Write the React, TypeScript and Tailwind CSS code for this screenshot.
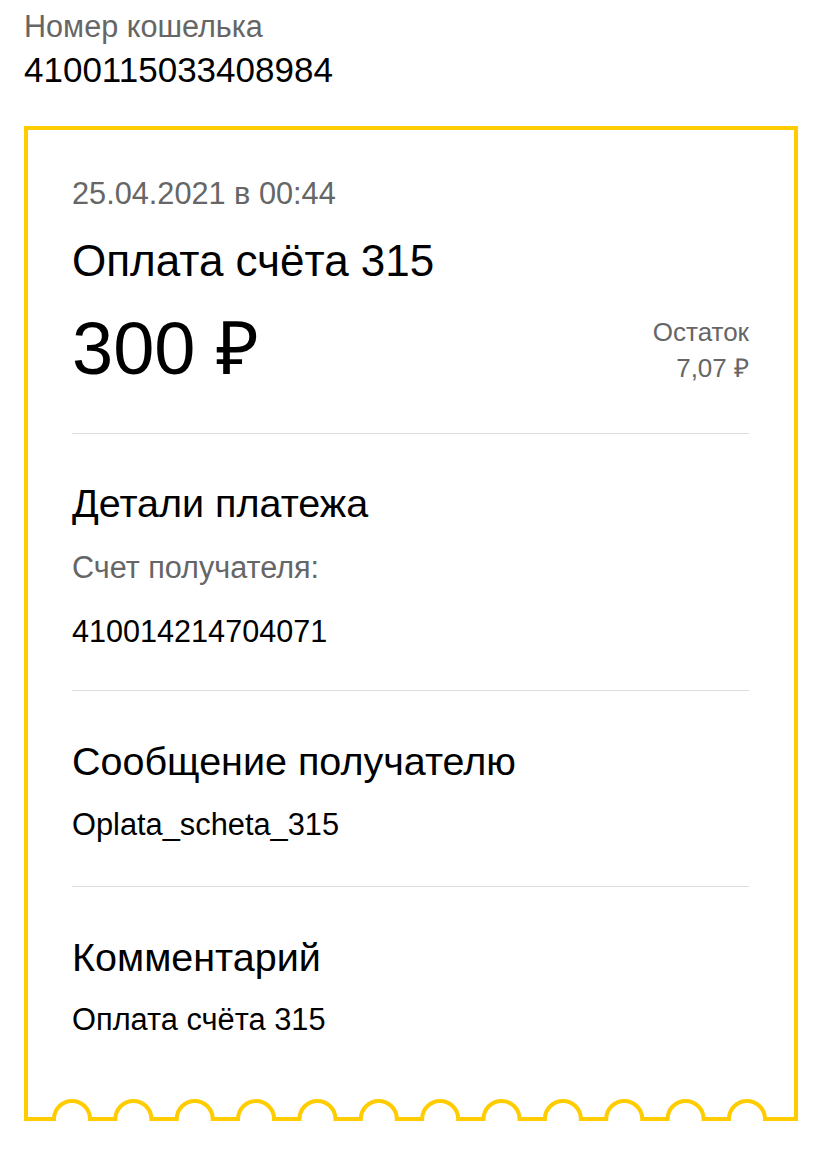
import React from "react";

const centers = Array.from({ length: 12 }, (_, i) => 44 + i * 61.36);

function Edge() {
  let d = "M0 22";
  for (const c of centers) {
    d += ` H${(c - 18).toFixed(2)} A18 18 0 0 1 ${(c + 18).toFixed(2)} 22`;
  }
  d += " H766";
  return (
    <svg width="766" height="24" viewBox="0 0 766 24" className="block mt-[59px]">
      <path d={d} fill="none" stroke="#ffcc00" strokeWidth="4" />
    </svg>
  );
}

function Divider({ mt }: { mt: string }) {
  return <div className={`h-px bg-[#dedcdc] ${mt}`} />;
}

export default function App() {
  return (
    <div className="bg-white min-h-[1149px] w-[831px] pl-[24px] pt-[8px] text-black [font-family:'Liberation_Sans',Arial,sans-serif]">
      <div className="text-[30.6px] leading-[36px] text-[#666666]">Номер кошелька</div>
      <div className="mt-[6px] text-[35px] leading-[40px]">4100115033408984</div>

      <div className="mt-[36px] w-[774px] border-x-4 border-t-4 border-[#ffcc00]">
        <div className="pl-[44px] pr-[45px] pt-[46px]">
          <div className="text-[30.7px] leading-[36px] text-[#666666]">25.04.2021 в 00:44</div>
          <div className="mt-[25px] text-[44px] leading-[48px]">Оплата счёта 315</div>
          <div className="mt-[24px] flex justify-between items-start">
            <div className="text-[74px] leading-[80px]">300 ₽</div>
            <div className="mt-[5px] text-right text-[26px] leading-[36px] text-[#666666]">
              <div>Остаток</div>
              <div>7,07 ₽</div>
            </div>
          </div>
          <Divider mt="mt-[44px]" />

          <div className="mt-[47px] text-[39.5px] leading-[44px]">Детали платежа</div>
          <div className="mt-[24px] text-[30.6px] leading-[36px] text-[#666666]">Счет получателя:</div>
          <div className="mt-[28px] text-[30.6px] leading-[36px]">410014214704071</div>
          <Divider mt="mt-[41px]" />

          <div className="mt-[48px] text-[39.5px] leading-[44px]">Сообщение получателю</div>
          <div className="mt-[24px] text-[30.8px] leading-[36px]">Oplata_scheta_315</div>
          <Divider mt="mt-[43px]" />

          <div className="mt-[48px] text-[39.5px] leading-[44px]">Комментарий</div>
          <div className="mt-[23px] text-[30.8px] leading-[36px]">Оплата счёта 315</div>
        </div>
        <Edge />
      </div>
    </div>
  );
}
